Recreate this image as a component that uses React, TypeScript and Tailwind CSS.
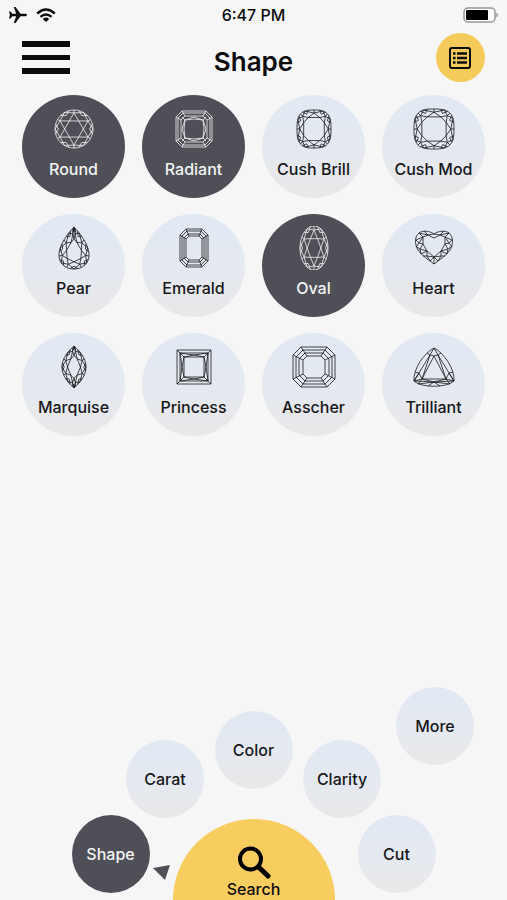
import React, { useState } from "react";
import clsx from "clsx";

type Point = [number, number];
type Curve = (t: number) => Point;

const toPath = (points: Point[], close = true) =>
    "M" + points.map(([x, y]) => `${x.toFixed(2)} ${y.toFixed(2)}`).join("L") + (close ? "Z" : "");

// Outlines of the brilliant cuts, t = 0 is the top of the stone
const superellipse =
    (n: number): Curve =>
    (t) => {
        const s = Math.sin(t);
        const c = Math.cos(t);
        return [
            Math.sign(s) * Math.pow(Math.abs(s), 2 / n),
            -Math.sign(c) * Math.pow(Math.abs(c), 2 / n),
        ];
    };
const pearCurve: Curve = (t) => [(Math.sin(t) * Math.abs(Math.sin(t / 2))) / 0.77, -Math.cos(t)];
const marquiseCurve: Curve = (t) => [Math.sin(t) * Math.abs(Math.sin(t)), -Math.cos(t)];

interface BrilliantProps {
    curve: Curve;
    rx: number;
    ry: number;
    table: number;
    star: number;
    sides?: number;
    shift?: number;
    phase?: number;
}

// Girdle, table and the star, kite and girdle facets between them
const Brilliant: React.FC<BrilliantProps> = ({
    curve,
    rx,
    ry,
    table,
    star,
    sides = 8,
    shift = 0,
    phase = 0.5,
}) => {
    const step = (Math.PI * 2) / sides;
    const at = (i: number, scale: number): Point => {
        const [x, y] = curve((i + phase) * step);
        return [22 + x * rx * scale, 22 + ry * (y * scale + shift * (1 - scale))];
    };
    const indexes = Array.from({ length: sides }, (_, i) => i);
    const outline = Array.from({ length: sides * 8 }, (_, i) => at(i / 8, 1));
    return (
        <>
            <path d={toPath(outline)} />
            <path d={toPath(indexes.map((i) => at(i, table)))} />
            {indexes.map((i) => (
                <path
                    key={i}
                    d={
                        toPath([at(i, table), at(i + 0.5, star), at(i + 1, table)], false) +
                        toPath([at(i, 1), at(i + 0.5, star), at(i + 1, 1)], false) +
                        toPath([at(i + 0.5, star), at(i + 0.5, 1)], false) +
                        toPath([at(i - 0.25, 1), at(i, 0.82), at(i + 0.25, 1)], false)
                    }
                />
            ))}
        </>
    );
};

// Each step is [half width, half height, corner cut]
const StepCut: React.FC<{ steps: [number, number, number][] }> = ({ steps }) => {
    const rings = steps.map(([w, h, c]): Point[] => [
        [22 - w + c, 22 - h],
        [22 + w - c, 22 - h],
        [22 + w, 22 - h + c],
        [22 + w, 22 + h - c],
        [22 + w - c, 22 + h],
        [22 - w + c, 22 + h],
        [22 - w, 22 + h - c],
        [22 - w, 22 - h + c],
    ]);
    const last = rings[rings.length - 1];
    return (
        <>
            {rings.map((ring, i) => (
                <path key={i} d={toPath(ring)} />
            ))}
            {rings[0].map((point, i) => (
                <path key={i} d={toPath([point, last[i]], false)} />
            ))}
        </>
    );
};

const shapes: { name: string; icon: React.ReactNode }[] = [
    {
        name: "Round",
        icon: <Brilliant curve={superellipse(2)} rx={19} ry={19} table={0.49} star={0.85} sides={6} />,
    },
    {
        name: "Radiant",
        icon: (
            <>
                <StepCut steps={[[18, 18, 6], [16, 16, 5], [13, 13, 4]]} />
                <path d="M13 13Q22 11 31 13Q33 22 31 31Q22 33 13 31Q11 22 13 13Z" />
                <path d="M10 10L13 13L22 10L31 13L34 10M10 34L13 31L22 34L31 31L34 34M13 13L10 22L13 31M31 13L34 22L31 31" />
            </>
        ),
    },
    {
        name: "Cush Brill",
        icon: <Brilliant curve={superellipse(3)} rx={17} ry={19} table={0.64} star={0.84} />,
    },
    {
        name: "Cush Mod",
        icon: <Brilliant curve={superellipse(3)} rx={20} ry={20} table={0.64} star={0.84} />,
    },
    {
        name: "Pear",
        icon: <Brilliant curve={pearCurve} rx={15} ry={21} table={0.54} star={0.78} shift={0.25} phase={0} />,
    },
    {
        name: "Emerald",
        icon: <StepCut steps={[[14, 19, 6], [12, 17, 5], [10, 14, 4], [8, 12, 3]]} />,
    },
    {
        name: "Oval",
        icon: <Brilliant curve={superellipse(2)} rx={14} ry={22} table={0.49} star={0.82} sides={6} />,
    },
    {
        name: "Heart",
        icon: (
            <>
                <path d="M22 8C18 5 11 4 7 7C2 11 3 19 6 24C10 30 17 34 22 38C27 34 34 30 38 24C41 19 42 11 37 7C33 4 26 5 22 8Z" />
                <path d="M22 12L16 9L11 11L11 18L15 25L22 31L29 25L33 18L33 11L28 9Z" />
                <path d="M22 8L16 9L12 5M16 9L7 7L11 11L4 14L7 17L11 18M11 11L7 17L4 21M11 18L8 23L5 21M8 23L15 25L9 28M8 23L9 28M15 25L15 30L11 30M15 30L22 31L22 38M15 30L18 35L22 31" />
                <path d="M22 8L28 9L32 5M28 9L37 7L33 11L40 14L37 17L33 18M33 11L37 17L40 21M33 18L36 23L39 21M36 23L29 25L35 28M36 23L35 28M29 25L29 30L33 30M29 30L22 31M29 30L26 35L22 31" />
            </>
        ),
    },
    {
        name: "Marquise",
        icon: <Brilliant curve={marquiseCurve} rx={12} ry={21} table={0.54} star={0.8} phase={0} />,
    },
    {
        name: "Princess",
        icon: (
            <>
                <path d="M5 5H39V39H5ZM8 8H36V36H8ZM12 12H32V32H12Z" />
                <path d="M5 5L12 12M39 5L32 12M5 39L12 32M39 39L32 32" />
                <path d="M8 8L22 10L36 8L34 22L36 36L22 34L8 36L10 22Z" />
                <path d="M12 12L22 10L32 12L34 22L32 32L22 34L12 32L10 22Z" />
            </>
        ),
    },
    {
        name: "Asscher",
        icon: <StepCut steps={[[21, 20, 8], [18, 17, 7], [15, 14, 6], [11, 11, 4]]} />,
    },
    {
        name: "Trilliant",
        icon: (
            <>
                <path d="M22 3C32 8 43 24 42 36C35 43 9 43 2 36C1 24 12 8 22 3Z" />
                <path d="M22 11L34 34H10Z" />
                <path d="M22 3L18 10L10 34L2 36L18 10L22 11L26 10L42 36L34 34L26 10L22 3" />
                <path d="M2 36L7 28L10 34L6 39L22 37L38 39L34 34L37 28L42 36M2 36L22 37L42 36M10 34L22 37L34 34" />
                <path d="M18 10L15 8M26 10L29 8M7 28L3 27M37 28L41 27M22 37L16 41M22 37L28 41" />
            </>
        ),
    },
];

const RadialButton: React.FC<{ label: string; active: string; onSelect: (label: string) => void }> = ({
    label,
    active,
    onSelect,
}) => (
    <button
        onClick={() => onSelect(label)}
        className={clsx(
            "size-[78px] shrink-0 rounded-full text-base font-medium",
            active === label
                ? "bg-[#4f5057] text-[#f3f3f3]"
                : "bg-linear-to-b from-[#e1e9f3] via-[#e5e9f0] to-[#e8e8e8] text-[#17171b]"
        )}
    >
        {label}
    </button>
);

const App: React.FC = () => {
    const [selected, setSelected] = useState<string[]>(["Round", "Radiant", "Oval"]);
    const [section, setSection] = useState("Shape");

    const toggle = (name: string) =>
        setSelected((prev) => (prev.includes(name) ? prev.filter((n) => n !== name) : [...prev, name]));

    return (
        <div className="flex min-h-screen flex-col overflow-hidden bg-[#f6f6f6] font-['Inter',sans-serif] text-[#0c0c0e]">
            {/* Status bar */}
            <div className="grid h-[30px] grid-cols-3 items-center px-2">
                <div className="flex items-center gap-2">
                    <svg width="20" height="18" viewBox="0 0 20 18" fill="currentColor" aria-hidden="true">
                        <path d="M19 9Q19 10.200 17 10.200H12.500L7.500 17H5.800L8.200 10.200H4.200L2.600 12.600H1L1.900 9L1 5.400H2.600L4.200 7.800H8.200L5.800 1H7.500L12.500 7.800H17Q19 7.800 19 9Z" />
                    </svg>
                    <svg width="20" height="15" viewBox="0 0 20 15" fill="none" stroke="currentColor" strokeWidth="2.400" aria-hidden="true">
                        <path d="M1.200 5.500Q10-2.300 18.800 5.500M4.400 8.900Q10 4 15.600 8.900" />
                        <path d="M10 14L6.800 10.900Q10 8.300 13.200 10.900Z" fill="currentColor" stroke="none" />
                    </svg>
                </div>
                <span className="text-center text-base font-medium">6:47 PM</span>
                <svg className="justify-self-end" width="36" height="16" viewBox="0 0 36 16" aria-hidden="true">
                    <rect x="1" y="1" width="31" height="14" rx="4" fill="#fff" stroke="#96969a" strokeWidth="1.500" />
                    <rect x="3" y="3" width="22" height="10" rx="1" fill="#000" />
                    <path d="M33.500 5.500Q36 8 33.500 10.500Z" fill="#77777b" />
                </svg>
            </div>

            {/* Header */}
            <header className="grid grid-cols-3 items-center px-[22px] pt-[3px] pb-[13px]">
                <button aria-label="Menu" className="flex w-12 flex-col gap-2">
                    <span className="h-[6px] bg-current" />
                    <span className="h-[5px] bg-current" />
                    <span className="h-[6px] bg-current" />
                </button>
                <h1 className="pt-2 text-center text-[26px] leading-8 font-semibold">Shape</h1>
                <button
                    aria-label="Results list"
                    className="flex size-[49px] items-center justify-center justify-self-end rounded-full bg-[#f5cb5c]"
                >
                    <svg width="22" height="22" viewBox="0 0 22 22" fill="none" stroke="currentColor" strokeWidth="2" aria-hidden="true">
                        <rect x="1" y="1" width="20" height="20" rx="2" />
                        <path d="M8 6.500H18M8 11H18M8 15.500H18M4 6.500H6.500M4 11H6.500M4 15.500H6.500" strokeWidth="2.400" />
                    </svg>
                </button>
            </header>

            {/* Shape picker */}
            <main className="grid grid-cols-4 gap-x-[17px] gap-y-4 px-[22px]">
                {shapes.map(({ name, icon }) => (
                    <button
                        key={name}
                        aria-pressed={selected.includes(name)}
                        onClick={() => toggle(name)}
                        className={clsx(
                            "flex aspect-square flex-col items-center gap-2 rounded-full pt-3 text-base leading-5 font-medium whitespace-nowrap",
                            selected.includes(name)
                                ? "bg-[#4f5057] text-[#f3f3f3]"
                                : "bg-linear-to-b from-[#e1e9f3] via-[#e5e9f0] to-[#e8e8e8] text-[#17171b]"
                        )}
                    >
                        <svg
                            className="size-11 shrink-0"
                            viewBox="0 0 44 44"
                            fill="none"
                            stroke="currentColor"
                            strokeWidth="0.800"
                            strokeLinejoin="round"
                            aria-hidden="true"
                        >
                            {icon}
                        </svg>
                        {name}
                    </button>
                ))}
            </main>

            {/* Radial menu */}
            <nav className="mt-auto flex flex-col items-center pt-8">
                <div className="flex self-end pr-[33px]">
                    <RadialButton label="More" active={section} onSelect={setSection} />
                </div>
                <div className="-mt-[54px] flex">
                    <RadialButton label="Color" active={section} onSelect={setSection} />
                </div>
                <div className="-mt-[49px] flex gap-[99px]">
                    <RadialButton label="Carat" active={section} onSelect={setSection} />
                    <RadialButton label="Clarity" active={section} onSelect={setSection} />
                </div>
                <div className="-mt-[3px] flex items-start">
                    <RadialButton label="Shape" active={section} onSelect={setSection} />
                    <div className="flex w-[23px] justify-center pt-[50px]">
                        <svg width="17" height="16" viewBox="0 0 17 16" fill="#4f5057" aria-hidden="true">
                            <path d="M0 3L17 0L12 15Z" />
                        </svg>
                    </div>
                    <button className="mt-1 flex h-[81px] w-[162px] flex-col items-center rounded-t-full bg-[#f7cd5f] pt-[26px] text-base leading-5 font-medium">
                        <svg width="34" height="34" viewBox="0 0 34 34" fill="none" stroke="#000" strokeWidth="4" strokeLinecap="round" aria-hidden="true">
                            <circle cx="13.500" cy="14" r="10.500" />
                            <path d="M21.500 22L31 31" strokeWidth="5" />
                        </svg>
                        Search
                    </button>
                    <div className="w-[23px]" />
                    <RadialButton label="Cut" active={section} onSelect={setSection} />
                </div>
            </nav>
        </div>
    );
};

export default App;
